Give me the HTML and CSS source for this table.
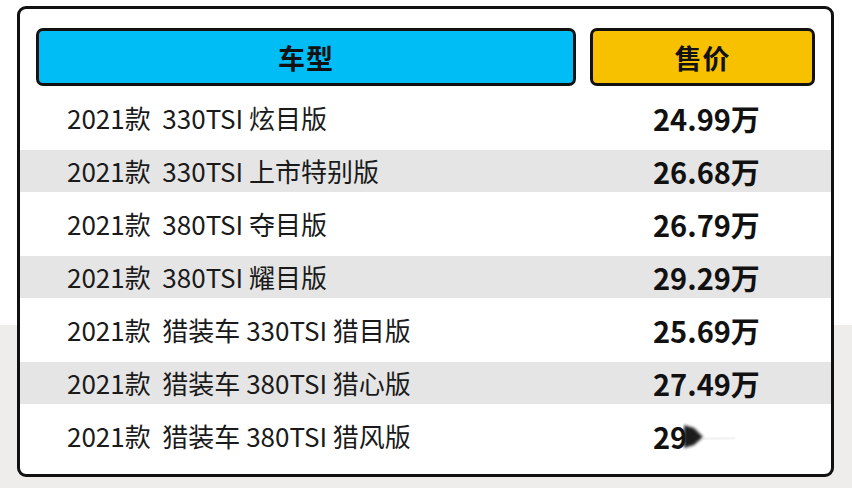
FILE: index.html
```html
<!DOCTYPE html>
<html lang="zh">
<head>
<meta charset="utf-8">
<link rel="stylesheet" href="styles.css">
</head>
<body>
<div class="page">
  <div class="card">
    <div class="head">
      <div class="hcell blue">车型</div>
      <div class="hcell yellow">售价</div>
    </div>
    <div class="rows">
      <div class="row"><div class="model">2021款&nbsp; 330TSI 炫目版</div><div class="price">24.99万</div></div>
      <div class="row alt"><div class="model">2021款&nbsp; 330TSI 上市特别版</div><div class="price">26.68万</div></div>
      <div class="row"><div class="model">2021款&nbsp; 380TSI 夺目版</div><div class="price">26.79万</div></div>
      <div class="row alt"><div class="model">2021款&nbsp; 380TSI 耀目版</div><div class="price">29.29万</div></div>
      <div class="row"><div class="model">2021款&nbsp; 猎装车 330TSI 猎目版</div><div class="price">25.69万</div></div>
      <div class="row alt"><div class="model">2021款&nbsp; 猎装车 380TSI 猎心版</div><div class="price">27.49万</div></div>
      <div class="row"><div class="model">2021款&nbsp; 猎装车 380TSI 猎风版</div><div class="price">29<svg class="smudge" width="64" height="30" viewBox="0 0 64 30"><defs><filter id="b" x="-50%" y="-50%" width="200%" height="200%"><feGaussianBlur stdDeviation="1.5"/></filter><filter id="b2"><feGaussianBlur stdDeviation="0.8"/></filter></defs><polygon points="1,3 11,6 20,15 11,23 1,26" fill="#1a1a1a" filter="url(#b)"/><line x1="18" y1="17" x2="52" y2="16" stroke="#d8d8d8" stroke-width="1" filter="url(#b2)"/></svg></div></div>
    </div>
  </div>
</div>
</body>
</html>
```

FILE: styles.css
```css
* { box-sizing: border-box; }
html, body { margin: 0; padding: 0; }
body {
  width: 852px;
  height: 488px;
  overflow: hidden;
  font-family: "Noto Sans CJK SC", "Noto Sans", sans-serif;
  color: #1a1a1a;
}
.page {
  width: 852px;
  height: 488px;
  padding: 6px 0 0 17px;
  background: linear-gradient(to bottom, #ffffff 0, #ffffff 325px, #efedec 325px, #efedec 100%);
}
.card {
  width: 817px;
  height: 471px;
  border: 3px solid #111;
  border-radius: 9px;
  background: #fff;
  overflow: hidden;
}
.head {
  display: grid;
  grid-template-columns: 540px 225px;
  column-gap: 14px;
  padding: 19px 16px 0;
}
.hcell {
  height: 58px;
  border: 3px solid #111;
  border-radius: 7px;
  display: flex;
  align-items: center;
  justify-content: center;
  font-size: 27px;
  font-weight: 700;
  color: #111;
  letter-spacing: 1px;
}
.blue { background: #00bdf5; }
.yellow { background: #f8c100; }
.rows {
  margin-top: 11px;
  display: flex;
  flex-direction: column;
  gap: 11px;
}
.row {
  height: 42px;
  display: grid;
  grid-template-columns: 540px 225px;
  column-gap: 14px;
  padding: 0 16px;
  align-items: center;
}
.row.alt { background: #e5e5e5; }
.model {
  padding-left: 31px;
  font-size: 26px;
  line-height: 42px;
  white-space: nowrap;
}
.price {
  padding-left: 63px;
  font-size: 29px;
  font-weight: 700;
  line-height: 42px;
  color: #111;
  white-space: nowrap;
  display: flex;
  align-items: center;
}
.smudge { display: block; margin-left: -4px; margin-top: 2px; }
```
